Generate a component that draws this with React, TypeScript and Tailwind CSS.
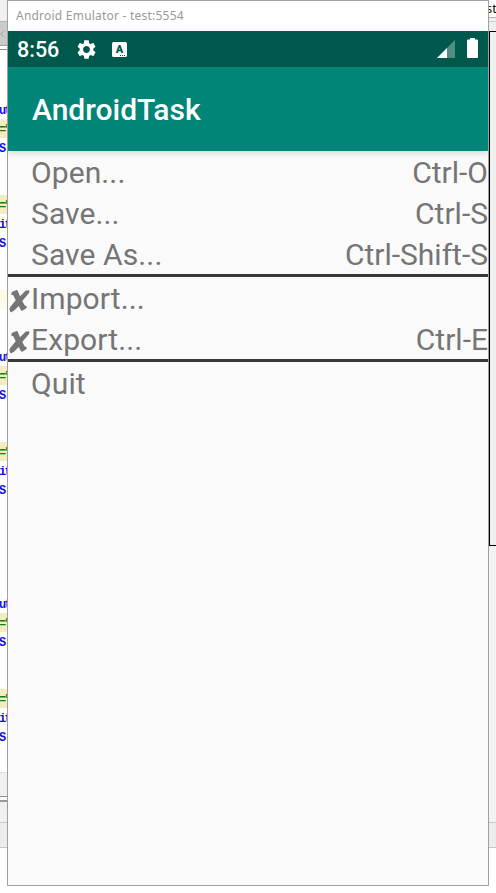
const codeRows: Record<number, { text: string; kind: 'word' | 'value' | 'blank' }> = {};
for (const base of [2, 15, 28]) {
  codeRows[base] = { text: 'ut', kind: 'word' };
  codeRows[base + 1] = { text: '="', kind: 'value' };
  codeRows[base + 2] = { text: 'S:', kind: 'word' };
  codeRows[base + 5] = { text: '="', kind: 'value' };
  codeRows[base + 6] = { text: 'it', kind: 'word' };
  codeRows[base + 7] = { text: 'S:', kind: 'word' };
}
codeRows[12] = { text: '', kind: 'blank' };

const rowStyle = {
  word: 'text-[#1010e0]',
  value: 'bg-[#f5ebc1] text-[#108010]',
  blank: 'bg-[#fffae3]',
};

function EditorEdge() {
  return (
    <div className="flex h-full w-[7px] shrink-0 flex-col overflow-hidden bg-white">
      <div className="h-[22px] shrink-0 border-b border-[#b4b4b4] bg-[#f0f0f0]" />
      <div className="h-6 shrink-0 border-b border-[#a0a0a0] bg-[#cbcbcb]">
        <svg className="h-6 w-[7px]" viewBox="0 0 7 24" fill="none" stroke="#a2a2a2">
          <path d="M4.5 8.5 0.5 12 4.5 15.5" />
        </svg>
      </div>
      <div className="h-1 shrink-0 border-b border-[#909090]" />
      <div className="h-[722px] shrink-0 pt-3">
        {Array.from({ length: 37 }, (_, i) => {
          const row = codeRows[i];
          return (
            <div
              key={i}
              className={`h-[19px] overflow-hidden whitespace-nowrap font-['Liberation_Mono',monospace] text-[12px] leading-[23px] font-bold tracking-[-1.7px] ${row ? rowStyle[row.kind] : ''}`}
            >
              <span className="-ml-px">{row?.text}</span>
            </div>
          );
        })}
      </div>
      <div className="h-[25px] shrink-0 border-y border-t-[#dcdcdc] border-b-[#909090] bg-[#f0f0f0]" />
      <div className="h-[3px] shrink-0 bg-[#fafafa]" />
      <div className="h-[2px] shrink-0 bg-[#999]" />
      <div className="h-[21px] shrink-0 border-b border-[#c8c8c8] bg-[#f0f0f0]" />
      <div className="h-[25px] shrink-0 border-b border-[#c8c8c8] bg-[#ececec]" />
    </div>
  );
}

function ToolEdge() {
  return (
    <div className="flex h-full w-[7px] shrink-0 flex-col overflow-hidden bg-white">
      <div className="h-[18px] shrink-0 border-b border-[#b0b0b0] whitespace-nowrap font-['Open_Sans',sans-serif] text-[13px] leading-[16px] text-black">
        <span className="-ml-[3px]">st</span>
      </div>
      <div className="h-1 shrink-0 border-b border-[#cfcfcf] bg-[#efefef]" />
      <div className="h-[9px] shrink-0 bg-[#efefef]" />
      <div className="h-[515px] shrink-0 border-y border-l border-black bg-[#f0f0f0]" />
      <div className="h-[277px] shrink-0 border-b border-[#c8c8c8] bg-[#f3f3f3]" />
      <div className="h-[25px] shrink-0 border-b border-[#c8c8c8] bg-[#ececec]" />
    </div>
  );
}

function StatusBar() {
  return (
    <div className="flex h-9 shrink-0 items-center bg-[#00574b] text-white">
      <span className="ml-[9px] w-[58px] pt-px text-[21.5px] leading-9 font-medium">8:56</span>
      <svg className="h-[23px] w-[23px]" viewBox="0 0 24 24" fill="currentColor">
        <path d="M19.14 12.94c.04-.3.06-.61.06-.94 0-.32-.02-.64-.07-.94l2.03-1.58c.18-.14.23-.41.12-.61l-1.92-3.32c-.12-.22-.37-.29-.59-.22l-2.39.96c-.5-.38-1.03-.7-1.62-.94l-.36-2.54c-.04-.24-.24-.41-.48-.41h-3.84c-.24 0-.43.17-.47.41l-.36 2.54c-.59.24-1.13.57-1.62.94l-2.39-.96c-.22-.08-.47 0-.59.22L2.74 8.87c-.12.21-.08.47.12.61l2.03 1.58c-.05.3-.09.63-.09.94s.02.64.07.94l-2.03 1.58c-.18.14-.23.41-.12.61l1.92 3.32c.12.22.37.29.59.22l2.39-.96c.5.38 1.03.7 1.62.94l.36 2.54c.05.24.24.41.48.41h3.84c.24 0 .44-.17.47-.41l.36-2.54c.59-.24 1.13-.56 1.62-.94l2.39.96c.22.08.47 0 .59-.22l1.92-3.32c.12-.22.07-.47-.12-.61l-2.01-1.58zM12 15.6c-1.98 0-3.6-1.62-3.6-3.6s1.62-3.6 3.6-3.6 3.6 1.62 3.6 3.6-1.62 3.6-3.6 3.6z" />
      </svg>
      <div className="ml-[14px] flex h-[15px] w-[15px] flex-col items-center rounded-[1.5px] bg-white text-[#00574b]">
        <span className="h-[13px] text-[11px] leading-[16px] font-black">A</span>
        <span className="ml-1.5 flex gap-px">
          <i className="h-px w-px bg-[#00574b]" />
          <i className="h-px w-px bg-[#00574b]" />
          <i className="h-px w-px bg-[#00574b]" />
        </span>
      </div>
      <svg className="ml-auto h-[18px] w-[18px]" viewBox="0 0 18 18" fill="white">
        <path d="M18 0V18H0Z" opacity=".32" />
        <path d="M10 8V18H0Z" />
      </svg>
      <svg className="mr-[10px] ml-3 h-5 w-[11px] -translate-y-px" viewBox="0 0 11 20" fill="white">
        <path d="M3 0H8V1.5H10Q11 1.5 11 2.5V19Q11 20 10 20H1Q0 20 0 19V2.5Q0 1.5 1 1.5H3Z" />
      </svg>
    </div>
  );
}

function MenuRow({ label, shortcut, marked }: { label: string; shortcut?: string; marked?: boolean }) {
  return (
    <div className="flex h-[41px] shrink-0 text-[30px] leading-[43px] text-[#757575]">
      <div className="flex w-[23px] items-center pl-px">
        {marked && (
          <svg className="mt-[7px] h-[24px] w-[21px]" viewBox="0 0 21 24" fill="currentColor">
            <path d="M2.7 3.3 4.3 2.3 7.7 1Q8.5 1 8.7 1.7L11 7.3 17 1.2 18.2 1.7 19.3 1.1 20.5 1.9 20 4 13.3 12 15.3 15.7Q16.2 17.2 17.7 17L17.3 19.3 13.3 21.7Q12.2 21.8 11.7 20.7L9.7 17 4.7 22 3.9 21.9 3 23.3 1.4 23 .3 20.3 1 18.3 6.7 11.3 4.3 6.3 2.3 5.7Z" />
          </svg>
        )}
      </div>
      <span className="tracking-[0.1px]">{label}</span>
      <span className="ml-auto">{shortcut}</span>
    </div>
  );
}

function Divider() {
  return <div className="h-[3px] shrink-0 bg-[#3a3737]" />;
}

export default function App() {
  return (
    <div className="flex h-[893px] w-[496px] overflow-hidden bg-white font-['Roboto',sans-serif]">
      <EditorEdge />
      <main className="flex h-[886px] w-[482px] shrink-0 flex-col border border-[#a0a0a0] bg-[#fafafa]">
        <div className="h-[30px] shrink-0 bg-white pl-2 font-['Noto_Sans',sans-serif] text-[12px] leading-[29px] tracking-[0.22px] text-[#999]">
          Android Emulator - test:5554
        </div>
        <StatusBar />
        <header className="z-10 h-[84px] shrink-0 bg-[#008577] pl-6 text-[30px] leading-[85px] font-medium text-white shadow-[0_2px_6px_rgba(0,0,0,0.15)] [clip-path:inset(0_0_-12px_0)]">
          AndroidTask
        </header>
        <MenuRow label="Open..." shortcut="Ctrl-O" />
        <MenuRow label="Save..." shortcut="Ctrl-S" />
        <MenuRow label="Save As..." shortcut="Ctrl-Shift-S" />
        <Divider />
        <MenuRow label="Import..." marked />
        <MenuRow label="Export..." shortcut="Ctrl-E" marked />
        <Divider />
        <MenuRow label="Quit" />
      </main>
      <ToolEdge />
    </div>
  );
}
